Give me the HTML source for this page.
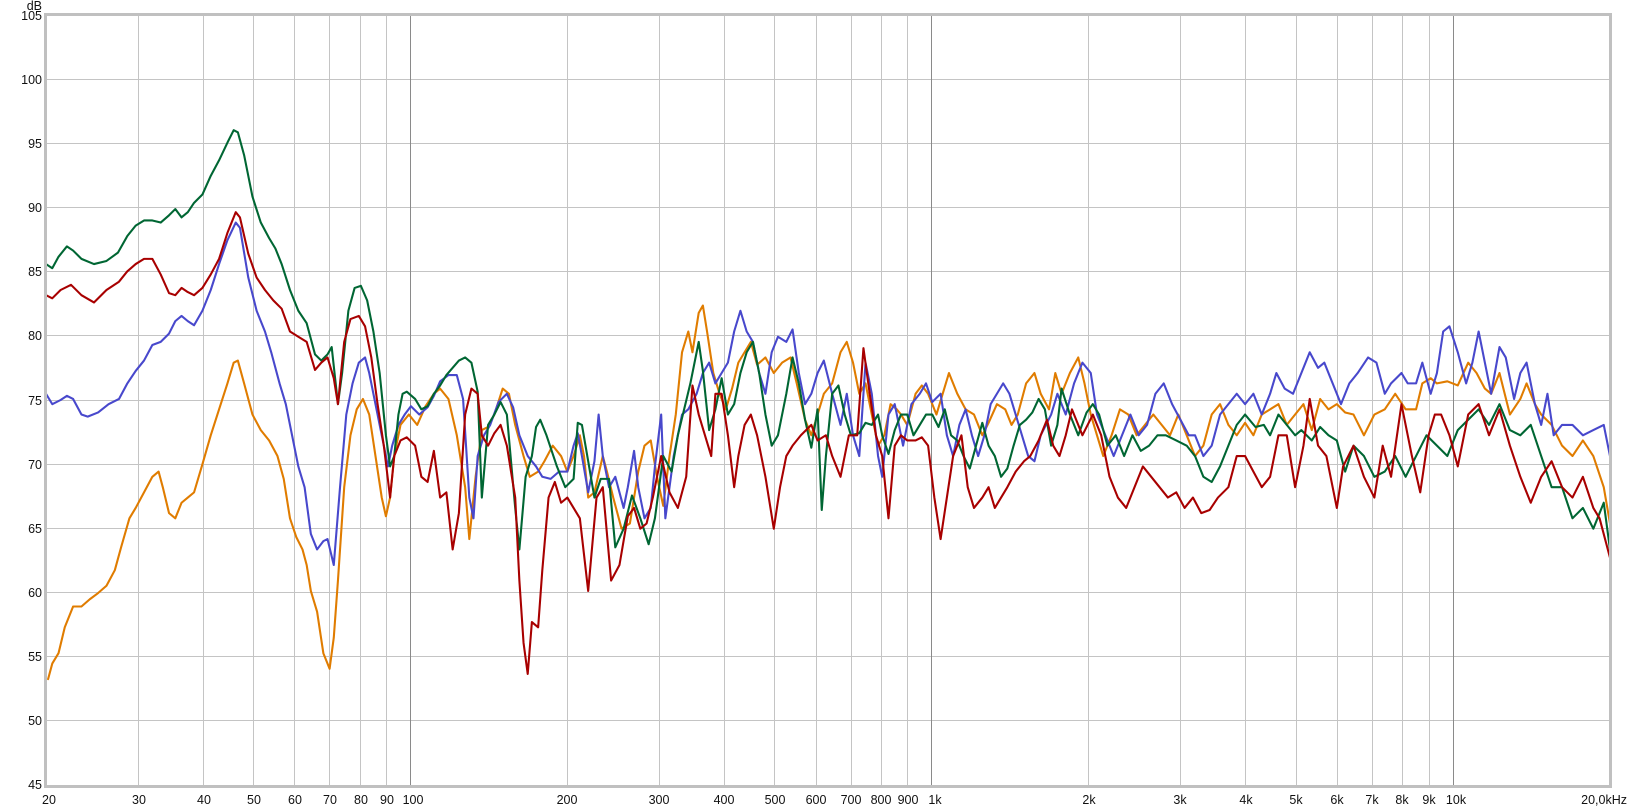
<!DOCTYPE html>
<html><head><meta charset="utf-8"><style>
html,body{margin:0;padding:0;background:#fff;}
svg{display:block;font-family:"Liberation Sans",Arial,sans-serif;}
</style></head><body>
<svg width="1633" height="809" viewBox="0 0 1633 809" xmlns="http://www.w3.org/2000/svg">
<rect width="1633" height="809" fill="#fff"/>
<g stroke="#c4c4c4" stroke-width="1">
<line x1="46" x2="1610" y1="79.5" y2="79.5"/><line x1="46" x2="1610" y1="143.5" y2="143.5"/><line x1="46" x2="1610" y1="207.5" y2="207.5"/><line x1="46" x2="1610" y1="271.5" y2="271.5"/><line x1="46" x2="1610" y1="335.5" y2="335.5"/><line x1="46" x2="1610" y1="400.5" y2="400.5"/><line x1="46" x2="1610" y1="464.5" y2="464.5"/><line x1="46" x2="1610" y1="528.5" y2="528.5"/><line x1="46" x2="1610" y1="592.5" y2="592.5"/><line x1="46" x2="1610" y1="656.5" y2="656.5"/><line x1="46" x2="1610" y1="720.5" y2="720.5"/>
<line x1="138.5" x2="138.5" y1="15" y2="786"/><line x1="203.5" x2="203.5" y1="15" y2="786"/><line x1="253.5" x2="253.5" y1="15" y2="786"/><line x1="294.5" x2="294.5" y1="15" y2="786"/><line x1="329.5" x2="329.5" y1="15" y2="786"/><line x1="360.5" x2="360.5" y1="15" y2="786"/><line x1="386.5" x2="386.5" y1="15" y2="786"/>
<line x1="567.5" x2="567.5" y1="15" y2="786"/><line x1="659.5" x2="659.5" y1="15" y2="786"/><line x1="724.5" x2="724.5" y1="15" y2="786"/><line x1="774.5" x2="774.5" y1="15" y2="786"/><line x1="816.5" x2="816.5" y1="15" y2="786"/><line x1="851.5" x2="851.5" y1="15" y2="786"/><line x1="881.5" x2="881.5" y1="15" y2="786"/><line x1="907.5" x2="907.5" y1="15" y2="786"/>
<line x1="1088.5" x2="1088.5" y1="15" y2="786"/><line x1="1180.5" x2="1180.5" y1="15" y2="786"/><line x1="1245.5" x2="1245.5" y1="15" y2="786"/><line x1="1296.5" x2="1296.5" y1="15" y2="786"/><line x1="1337.5" x2="1337.5" y1="15" y2="786"/><line x1="1372.5" x2="1372.5" y1="15" y2="786"/><line x1="1402.5" x2="1402.5" y1="15" y2="786"/><line x1="1429.5" x2="1429.5" y1="15" y2="786"/>
</g>
<g stroke="#8a8a8a" stroke-width="1">
<line x1="410.5" x2="410.5" y1="15" y2="786"/><line x1="931.5" x2="931.5" y1="15" y2="786"/><line x1="1453.5" x2="1453.5" y1="15" y2="786"/>
</g>
<g fill="none" stroke-width="2" stroke-linejoin="round" stroke-linecap="round" transform="translate(46,15) scale(1.04267,1.03774) translate(-46,-15)">
<polyline stroke="#e07c00" points="48,655 52,640 58,630 64,605 72,585 80,585 88,578 96,572 104,565 112,550 118,528 126,500 132,490 140,475 148,460 154,455 158,470 164,495 170,500 176,485 182,480 188,475 196,448 204,420 212,395 220,370 226,350 230,348 236,370 244,400 252,415 260,425 268,440 274,462 280,500 286,518 292,530 296,545 300,570 306,590 312,630 318,645 322,615 326,560 332,470 338,420 344,395 350,385 356,400 362,440 368,480 372,498 376,480 380,440 386,410 394,400 402,410 410,392 418,380 424,375 432,385 440,420 448,470 452,520 458,460 464,415 470,412 476,400 484,375 490,380 496,410 504,440 510,460 518,455 524,445 532,430 540,440 546,455 552,440 558,420 562,440 566,480 572,475 580,440 584,455 590,480 598,510 606,505 614,455 620,430 626,425 632,460 638,488 644,440 650,400 656,340 662,320 666,340 672,302 676,295 680,320 686,360 692,380 698,395 704,375 710,350 716,340 722,330 728,352 736,345 744,360 752,350 760,345 766,370 774,405 780,420 786,400 792,380 800,370 808,340 814,330 820,350 826,380 832,370 838,400 844,430 850,420 856,390 862,395 866,400 872,410 880,380 886,372 892,380 900,400 906,380 912,360 920,380 928,395 936,400 944,420 950,408 958,390 966,395 972,410 978,400 986,370 994,360 1000,380 1008,395 1014,360 1020,380 1028,360 1036,345 1042,370 1048,400 1054,420 1060,440 1068,420 1076,395 1084,400 1092,420 1100,410 1108,400 1116,410 1124,420 1132,400 1140,420 1148,440 1156,430 1164,400 1172,390 1180,410 1188,420 1196,408 1204,420 1212,400 1220,395 1228,390 1236,410 1244,400 1252,390 1260,415 1268,385 1276,395 1284,390 1292,398 1300,400 1310,420 1320,400 1330,395 1340,380 1350,395 1360,395 1366,370 1374,365 1380,370 1390,368 1400,372 1410,350 1418,360 1426,375 1432,380 1440,360 1450,400 1460,385 1466,370 1474,390 1480,400 1490,410 1500,430 1510,440 1520,425 1530,440 1540,470 1546,505"/>
<polyline stroke="#4848cc" points="46,380 52,390 60,386 66,382 72,385 80,400 86,402 96,398 106,390 116,385 124,370 132,358 140,348 148,333 156,330 164,322 170,310 176,305 182,310 188,314 196,300 204,280 212,255 220,232 228,215 232,220 240,268 248,300 256,320 262,340 270,370 276,390 282,420 288,450 294,470 300,515 306,530 312,522 316,520 322,545 328,470 334,400 340,370 346,350 352,345 356,360 362,390 368,420 374,450 378,430 384,410 390,400 396,392 404,400 412,393 418,382 424,368 432,362 440,362 446,385 452,480 456,500 460,440 466,420 472,410 480,388 488,380 494,393 500,420 508,440 516,450 522,460 530,462 538,455 546,455 552,430 556,418 560,440 566,475 572,445 576,400 580,440 586,470 592,460 600,490 604,470 610,435 614,470 620,500 626,490 630,450 636,400 640,500 648,440 656,400 662,395 670,380 676,360 682,350 688,370 694,360 700,350 706,320 712,300 718,320 724,330 730,360 736,380 742,340 748,325 756,330 762,318 768,360 774,390 780,380 786,360 792,348 800,380 808,410 814,380 820,420 826,440 832,350 838,380 844,440 848,460 854,400 860,390 868,430 876,390 884,380 890,370 896,388 904,380 910,420 916,440 922,410 928,395 934,420 940,440 946,420 952,390 958,380 964,370 970,380 976,400 982,420 988,440 994,445 1000,420 1010,400 1016,380 1024,400 1032,370 1040,350 1048,360 1054,400 1062,420 1070,440 1078,420 1086,400 1094,420 1102,410 1110,380 1118,370 1126,390 1134,405 1142,420 1148,420 1156,440 1164,430 1172,400 1180,390 1188,380 1196,390 1204,380 1212,400 1220,380 1226,360 1234,375 1242,380 1250,360 1258,340 1266,355 1272,350 1280,370 1288,390 1296,370 1304,360 1314,345 1322,350 1330,380 1336,370 1346,360 1352,370 1360,370 1366,350 1374,380 1380,360 1386,320 1392,315 1400,340 1408,370 1414,350 1420,320 1426,350 1432,380 1440,335 1446,345 1454,385 1460,360 1466,350 1474,390 1480,410 1486,380 1492,420 1500,410 1510,410 1520,420 1530,415 1540,410 1546,440"/>
<polyline stroke="#006633" points="46,255 52,259 58,248 66,238 72,242 80,250 92,255 104,252 115,244 124,228 132,218 140,213 148,213 156,215 164,208 170,202 176,210 182,205 188,196 196,188 204,170 212,155 220,138 226,126 230,128 236,150 244,190 252,215 260,230 266,240 272,255 280,280 288,300 296,312 304,342 310,348 316,342 320,335 326,390 330,360 336,300 342,278 348,276 354,290 360,320 366,360 372,420 376,450 380,440 384,400 388,380 392,378 400,385 406,395 412,392 418,380 424,372 430,362 436,355 442,348 448,345 454,350 460,378 464,480 470,410 476,400 482,388 488,400 496,490 500,530 506,460 512,440 516,412 520,405 526,420 536,450 544,470 552,462 556,408 560,410 566,445 572,480 578,462 586,462 592,528 600,510 608,478 616,500 624,525 630,500 638,440 646,455 652,420 658,395 664,370 672,330 676,358 682,415 688,395 694,365 700,400 706,390 712,360 718,340 724,330 730,360 736,400 742,430 748,420 756,380 762,345 768,370 774,405 780,432 786,395 790,492 794,440 800,380 806,372 812,400 818,420 826,418 832,408 838,410 844,400 848,420 854,438 860,415 866,400 872,400 878,420 884,410 890,400 896,400 902,412 908,395 914,420 920,425 926,440 932,452 938,430 944,408 950,430 956,440 962,460 968,452 974,430 980,410 986,405 992,398 998,385 1004,395 1010,430 1016,410 1020,375 1028,400 1036,420 1044,398 1050,390 1056,400 1064,430 1072,420 1080,440 1088,420 1096,435 1104,430 1112,420 1120,420 1130,425 1140,430 1148,440 1156,460 1164,465 1172,450 1180,430 1188,410 1196,400 1206,412 1214,410 1220,420 1228,400 1236,410 1244,420 1250,415 1260,425 1268,412 1276,420 1284,425 1292,455 1300,430 1310,440 1320,460 1330,455 1340,440 1350,460 1360,440 1370,420 1380,430 1390,440 1400,415 1410,405 1420,395 1430,410 1440,390 1450,415 1460,420 1470,410 1480,440 1490,470 1500,470 1510,500 1520,490 1530,510 1540,485 1546,530"/>
<polyline stroke="#a80000" points="46,285 52,288 60,280 70,275 80,285 92,292 104,280 116,272 124,262 132,255 140,250 148,250 156,265 164,283 170,285 176,278 182,282 188,285 196,278 204,265 212,250 220,225 228,205 232,210 240,245 248,268 256,280 264,290 272,298 280,320 288,325 296,330 304,357 310,350 316,345 322,365 326,390 332,330 338,308 346,305 352,315 358,345 364,390 370,430 376,480 380,440 386,425 392,422 400,430 406,460 412,465 418,435 424,480 430,475 436,530 442,495 448,400 454,375 460,380 464,420 470,430 476,418 482,410 488,430 496,480 500,560 504,620 508,650 512,600 518,605 522,550 528,480 534,465 540,485 546,480 552,490 558,500 566,570 574,480 580,470 588,560 596,545 604,498 610,490 616,510 622,505 628,480 636,440 644,475 652,490 660,460 666,372 672,400 678,420 684,440 688,380 694,380 700,420 706,470 710,440 716,410 722,400 728,420 736,460 744,510 750,470 756,440 762,430 770,420 780,410 786,425 794,420 800,440 808,460 816,420 824,420 830,336 836,380 842,420 848,440 854,500 860,430 866,420 872,425 880,425 886,422 892,430 898,480 904,520 910,480 916,440 924,420 930,470 936,490 944,480 950,470 956,490 962,480 968,470 976,455 984,445 990,440 998,425 1006,405 1012,430 1018,440 1024,420 1030,395 1040,420 1050,400 1058,420 1066,460 1074,480 1082,490 1090,470 1098,450 1106,460 1114,470 1122,480 1130,475 1138,490 1146,480 1154,495 1162,492 1170,480 1180,470 1188,440 1196,440 1204,455 1212,470 1220,460 1228,420 1236,420 1244,470 1252,430 1258,385 1266,430 1274,440 1284,490 1290,450 1300,430 1310,460 1320,480 1328,430 1336,460 1346,390 1356,440 1364,475 1372,420 1378,400 1384,400 1392,420 1400,450 1410,400 1420,390 1430,420 1440,395 1450,430 1460,460 1470,485 1480,460 1490,445 1500,470 1510,480 1520,460 1530,490 1536,500 1546,538"/>
</g>
<rect x="45.5" y="14.5" width="1565" height="772" fill="none" stroke="#c0c0c0" stroke-width="3"/>
<g font-size="12.5" fill="#111" text-anchor="end">
<text x="42" y="10">dB</text>
<text x="42" y="20">105</text><text x="42" y="84">100</text><text x="42" y="148">95</text><text x="42" y="212">90</text><text x="42" y="276">85</text><text x="42" y="340">80</text><text x="42" y="405">75</text><text x="42" y="469">70</text><text x="42" y="533">65</text><text x="42" y="597">60</text><text x="42" y="661">55</text><text x="42" y="725">50</text><text x="42" y="789">45</text>
</g>
<g font-size="12.5" fill="#111" text-anchor="middle">
<text x="49" y="804">20</text><text x="139" y="804">30</text><text x="204" y="804">40</text><text x="254" y="804">50</text><text x="295" y="804">60</text><text x="330" y="804">70</text><text x="361" y="804">80</text><text x="387" y="804">90</text><text x="413" y="804">100</text>
<text x="567" y="804">200</text><text x="659" y="804">300</text><text x="724" y="804">400</text><text x="775" y="804">500</text><text x="816" y="804">600</text><text x="851" y="804">700</text><text x="881" y="804">800</text><text x="908" y="804">900</text><text x="935" y="804">1k</text>
<text x="1089" y="804">2k</text><text x="1180" y="804">3k</text><text x="1246" y="804">4k</text><text x="1296" y="804">5k</text><text x="1337" y="804">6k</text><text x="1372" y="804">7k</text><text x="1402" y="804">8k</text><text x="1429" y="804">9k</text><text x="1456" y="804">10k</text>
</g>
<text x="1627" y="804" font-size="12.5" fill="#111" text-anchor="end">20,0kHz</text>
</svg>
</body></html>
